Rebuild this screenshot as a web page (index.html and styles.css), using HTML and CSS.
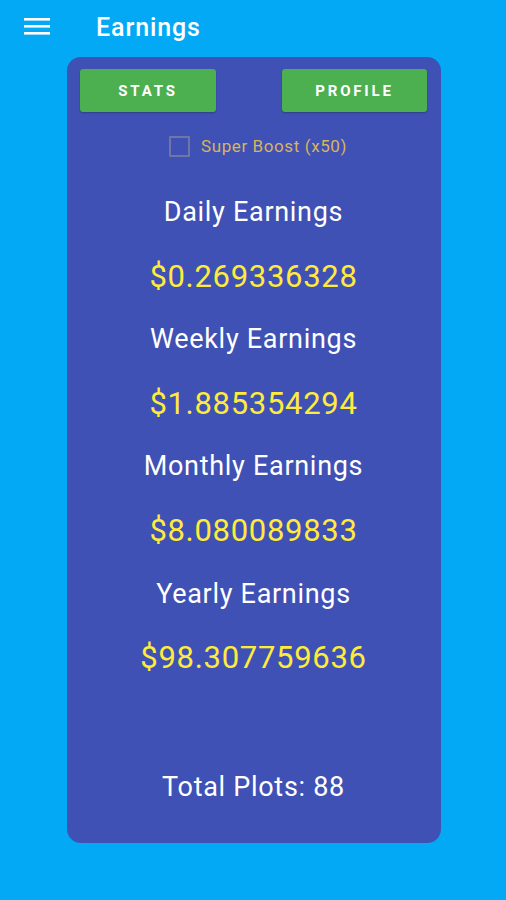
FILE: index.html
```html
<!DOCTYPE html>
<html lang="en">
<head>
    <meta charset="UTF-8">
    <meta name="viewport" content="width=device-width, initial-scale=1.0">
    <title>Earnings</title>
    <link rel="stylesheet" href="styles.css">
</head>
<body>
    <header class="toolbar">
        <button class="menu-btn" aria-label="Menu">
            <svg width="26" height="18" viewBox="0 0 26 18">
                <rect x="0" y="0" width="26" height="2.6" fill="#fff"/>
                <rect x="0" y="7" width="26" height="2.6" fill="#fff"/>
                <rect x="0" y="14" width="26" height="2.6" fill="#fff"/>
            </svg>
        </button>
        <h1 class="title">Earnings</h1>
    </header>

    <main class="card">
        <div class="actions">
            <button class="btn btn-stats">STATS</button>
            <button class="btn btn-profile">PROFILE</button>
        </div>

        <label class="boost">
            <span class="box"></span>
            <span class="boost-text">Super Boost (x50)</span>
        </label>

        <div class="earnings">
            <div class="label">Daily Earnings</div>
            <div class="value">$0.269336328</div>
            <div class="label">Weekly Earnings</div>
            <div class="value">$1.885354294</div>
            <div class="label">Monthly Earnings</div>
            <div class="value">$8.080089833</div>
            <div class="label">Yearly Earnings</div>
            <div class="value">$98.307759636</div>
        </div>

        <div class="total">Total Plots: 88</div>
    </main>
</body>
</html>
```

FILE: styles.css
```css
body {
    margin: 0;
    background: #03a9f4;
    font-family: Roboto, "Noto Sans", sans-serif;
    color: #fff;
}
.toolbar {
    height: 57px;
    display: flex;
    align-items: center;
    padding-left: 24px;
}
.menu-btn {
    background: none;
    border: none;
    padding: 0;
    width: 26px;
    height: 18px;
    display: flex;
    margin-top: -4px;
}
.title {
    margin: -3px 0 0 46px;
    font-size: 25px;
    font-weight: 500;
    letter-spacing: 0.9px;
}
.card {
    width: 374px;
    height: 786px;
    margin-left: 67px;
    box-sizing: border-box;
    background: #3f51b5;
    border-radius: 14px;
    padding: 12px 14px 24px 13px;
    display: flex;
    flex-direction: column;
}
.actions {
    display: flex;
    justify-content: space-between;
}
.btn {
    height: 43px;
    background: #4caf50;
    border: none;
    border-radius: 3px;
    color: #fff;
    font-family: Roboto, sans-serif;
    font-weight: 700;
    font-size: 15px;
    letter-spacing: 2.8px;
    box-shadow: 0 1px 2px rgba(0, 0, 0, 0.25);
}
.btn-stats {
    width: 136px;
}
.btn-profile {
    width: 145px;
}
.boost {
    display: flex;
    align-items: center;
    justify-content: center;
    margin-top: 24px;
    height: 20px;
    padding-left: 9px;
}
.box {
    width: 17px;
    height: 17px;
    border: 2px solid #7075a8;
    border-radius: 1px;
    margin-right: 11px;
}
.boost-text {
    color: #d8b55c;
    font-size: 17px;
    letter-spacing: 0.6px;
}
.earnings {
    margin-top: 25px;
    text-align: center;
}
.label {
    line-height: 63.6px;
    font-size: 27px;
    letter-spacing: 0.7px;
}
.value {
    line-height: 63.6px;
    font-size: 31px;
    letter-spacing: 0.7px;
    color: #ffeb3b;
}
.total {
    margin-top: auto;
    line-height: 64px;
    font-size: 27px;
    letter-spacing: 0.7px;
    text-align: center;
}
```
